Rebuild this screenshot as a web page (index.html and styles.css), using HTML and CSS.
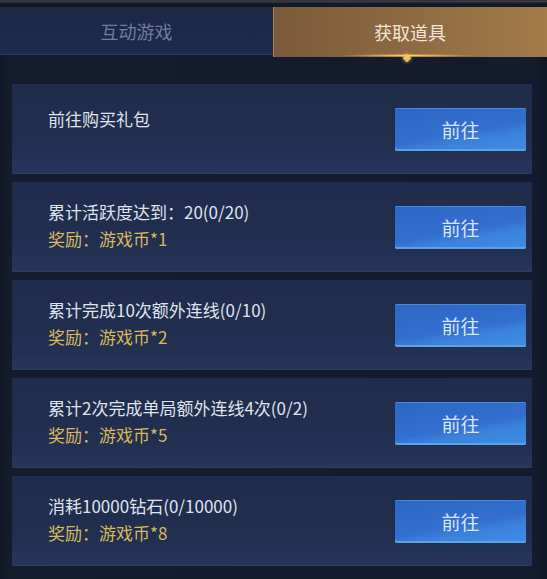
FILE: index.html
```html
<!DOCTYPE html>
<html lang="zh-CN">
<head>
<meta charset="utf-8">
<link rel="stylesheet" href="styles.css">
</head>
<body>
<div class="panel">
  <div class="top-strip"></div>
  <div class="tabs">
    <div class="tab">互动游戏</div>
    <div class="tab active">获取道具<span class="glow"></span><span class="diamond"></span></div>
  </div>
  <div class="list">
    <div class="card">
      <div class="info single"><div class="title">前往购买礼包</div></div>
      <div class="btn">前往</div>
    </div>
    <div class="card">
      <div class="info"><div class="title">累计活跃度达到：20(0/20)</div><div class="reward">奖励：游戏币*1</div></div>
      <div class="btn">前往</div>
    </div>
    <div class="card">
      <div class="info"><div class="title">累计完成10次额外连线(0/10)</div><div class="reward">奖励：游戏币*2</div></div>
      <div class="btn">前往</div>
    </div>
    <div class="card">
      <div class="info"><div class="title">累计2次完成单局额外连线4次(0/2)</div><div class="reward">奖励：游戏币*5</div></div>
      <div class="btn">前往</div>
    </div>
    <div class="card">
      <div class="info"><div class="title">消耗10000钻石(0/10000)</div><div class="reward">奖励：游戏币*8</div></div>
      <div class="btn">前往</div>
    </div>
  </div>
</div>
</body>
</html>
```
FILE: styles.css
```css
html, body {
  margin: 0;
  padding: 0;
  background: #121a2a;
}
body {
  width: 547px;
  height: 579px;
  overflow: hidden;
  font-family: "Noto Sans CJK SC", "Noto Sans", sans-serif;
}
.panel {
  width: 547px;
  height: 579px;
  background: linear-gradient(90deg, #0f1625 0px, #141c2d 10px, #131b2c 537px, #0f1625 547px);
}
.top-strip {
  height: 7px;
  background: linear-gradient(180deg, #151b27 0px, #4a4c52 1px, #2a2e38 2px, #111826 4px);
}
.tabs {
  display: flex;
  height: 50px;
}
.tab {
  width: 273px;
  height: 47px;
  display: flex;
  align-items: center;
  justify-content: center;
  font-size: 18px;
  color: #6f7d9a;
  background: linear-gradient(180deg, #1a2745 0%, #1d2b4b 100%);
  border-bottom: 1px solid #2a3656;
}
.tab.active {
  flex: 1;
  height: 50px;
  border-bottom: none;
  position: relative;
  color: #efe6d9;
  background: linear-gradient(90deg, #7a5a3a 0%, #8d6a43 50%, #a27b48 100%);
  box-shadow: inset 1px 0 0 #a88250;
}
.tab.active .glow {
  position: absolute;
  left: 70px;
  width: 130px;
  bottom: 0;
  height: 3px;
  background: radial-gradient(ellipse at center, #ffd77a 0%, rgba(230, 170, 70, 0.7) 40%, rgba(200, 140, 60, 0) 75%);
}
.tab.active .diamond {
  position: absolute;
  left: 131px;
  bottom: -4px;
  width: 6px;
  height: 6px;
  transform: rotate(45deg);
  background: #f3c160;
  box-shadow: 0 0 4px #ffcf6a;
}
.list {
  display: flex;
  flex-direction: column;
  gap: 8px;
  padding: 27px 15px 0 12px;
}
.card {
  height: 90px;
  display: flex;
  justify-content: space-between;
  align-items: center;
  background: linear-gradient(180deg, #1f2c4b 0%, #212f50 70%, #26365a 100%);
  box-shadow: inset 0 -1px 0 #2c3e63;
}
.info {
  align-self: flex-start;
  padding: 16px 0 0 36px;
  font-size: 17px;
  line-height: 27px;
}
.info.single {
  padding-top: 21px;
}
.title {
  color: #dfe3ec;
}
.reward {
  color: #d9b85c;
}
.btn {
  width: 131px;
  height: 43px;
  margin-right: 6px;
  border-radius: 2px;
  display: flex;
  align-items: center;
  justify-content: center;
  font-size: 19px;
  color: #d9e5f6;
  background: linear-gradient(170deg, #2d67c6 0%, #336fce 55%, #3b82dd 70%, #3f8ce3 100%);
  box-shadow: inset 0 -2px 0 #5aa3ea, inset 0 1px 0 #4b86d9;
}
```
